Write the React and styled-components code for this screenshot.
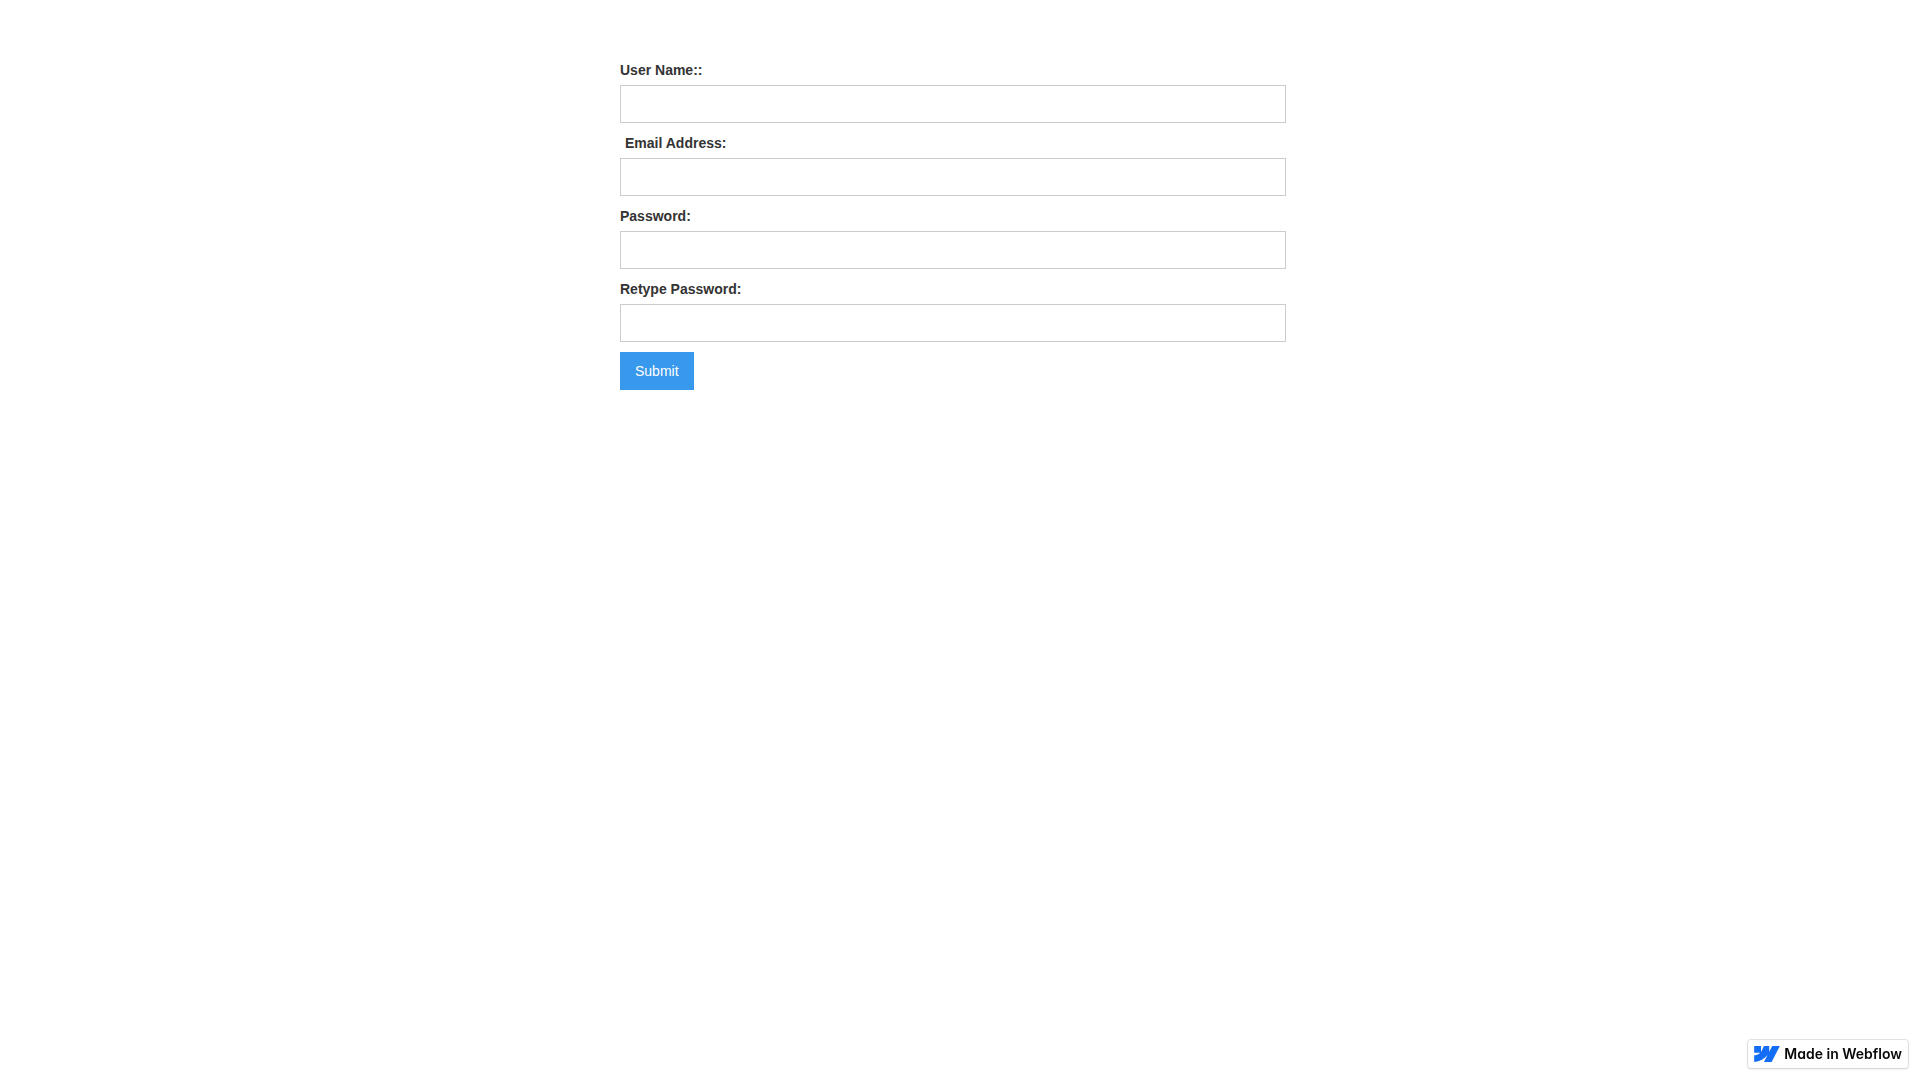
import React from "react";
import styled, { createGlobalStyle } from "styled-components";

const fields = [
  { id: "name", label: "User Name::", type: "text" },
  { id: "email", label: "Email Address:", type: "email", indent: true },
  { id: "password", label: "Password:", type: "password" },
  { id: "retype-password", label: "Retype Password:", type: "password" },
];

function WebflowBadge() {
  return (
    <Badge href="https://webflow.com">
      <svg width="26" height="16" viewBox="0 4.515 24 14.97" aria-hidden="true">
        <path
          fill="#146ef5"
          d="m24 4.515-7.658 14.97H9.149l3.205-6.204h-.144C9.566 16.713 5.621 18.973 0 19.485v-6.118s3.596-.213 5.71-2.435H0V4.515h6.417v5.278l.144-.001 2.622-5.277h4.854v5.244h.144l2.72-5.244H24Z"
        />
      </svg>
      Made in Webflow
    </Badge>
  );
}

function App() {
  const _submitHandler = (e) => {
    e.preventDefault();
  };
  return (
    <>
      <GlobalStyle />
      <Wrapper>
        <Form onSubmit={_submitHandler}>
          {fields.map(({ id, label, type, indent }) => (
            <React.Fragment key={id}>
              <Label htmlFor={id} $indent={indent}>
                {label}
              </Label>
              <Input id={id} name={id} type={type} />
            </React.Fragment>
          ))}
          <SubmitButton type="submit">Submit</SubmitButton>
        </Form>
      </Wrapper>
      <WebflowBadge />
    </>
  );
}

const GlobalStyle = createGlobalStyle`
  * {
    box-sizing: border-box;
  }
  body {
    margin: 0;
    background-color: white;
    color: #333;
    font-family: "Liberation Sans", Arial, sans-serif;
    font-size: 14px;
    line-height: 20px;
  }
`;

const Wrapper = styled.main`
  display: grid;
  grid-template-columns: 310fr 333fr 317fr;
  padding-top: 60px;
`;

const Form = styled.form`
  grid-column: 2;
  display: flex;
  flex-direction: column;
  align-items: flex-start;
`;

const Label = styled.label`
  margin-bottom: 5px;
  padding-left: ${({ $indent }) => ($indent ? "5px" : "0")};
  font-weight: bold;
`;

const Input = styled.input`
  width: 100%;
  height: 38px;
  margin-bottom: 10px;
  padding: 8px 12px;
  border: solid 1px #ccc;
  background-color: white;
  color: #333;
  font: inherit;
  &:focus {
    border-color: #3898ec;
    outline: 0;
  }
`;

const SubmitButton = styled.button`
  padding: 9px 15px;
  border: 0;
  background-color: #3898ec;
  color: white;
  font: inherit;
  cursor: pointer;
`;

const Badge = styled.a`
  position: fixed;
  right: 12px;
  bottom: 12px;
  display: flex;
  align-items: center;
  gap: 4px;
  height: 28px;
  padding: 6px;
  border-radius: 3px;
  background-color: white;
  box-shadow: 0 0 0 1px rgba(0, 0, 0, 0.1), 0 1px 3px rgba(0, 0, 0, 0.1);
  color: #080808;
  font-family: Inter, sans-serif;
  font-size: 14px;
  font-weight: 600;
  font-feature-settings: "cv11";
  text-decoration: none;
  white-space: nowrap;
`;

export default App;
